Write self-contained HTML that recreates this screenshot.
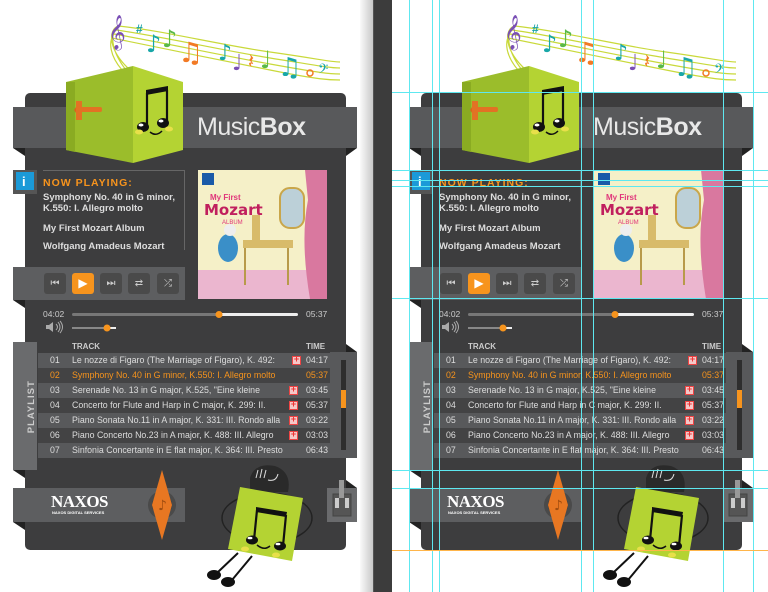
<!DOCTYPE html>
<html><head><meta charset="utf-8">
<style>
*{margin:0;padding:0;box-sizing:border-box}
body{width:768px;height:592px;background:#fff;position:relative;overflow:hidden;font-family:"Liberation Sans",Arial,sans-serif}
.pane{position:absolute;top:0;height:592px;overflow:hidden}
.app{position:absolute;top:0;width:370px;height:592px}
.a{position:absolute}
.t{position:absolute;white-space:nowrap;font-size:9.5px;color:#ddd;font-weight:bold;line-height:1}
.btn{position:absolute;top:273px;width:22px;height:21px;background:#4a4a4a;border-radius:3px;color:#ccc;font-size:10px;text-align:center;line-height:21px}
.row{position:absolute;left:38px;width:292px;height:15px}
.rt{position:absolute;white-space:nowrap;font-size:8.8px;color:#ddd;line-height:15px}
.plus{position:absolute;width:9px;height:9px;background:#f4c8c8;border:1px solid #e44;top:3px}
.plus:after{content:"+";position:absolute;left:0;top:-3px;width:7px;text-align:center;font-size:9px;color:#e33;font-weight:bold}
.gv{position:absolute;top:0;width:1px;height:592px;background:#5ee8f0}
.gh{position:absolute;left:392px;width:376px;height:1px;background:#5ee8f0}
.mb{left:197px;top:115px;font-size:25px;font-weight:normal;color:#e8e8e8;letter-spacing:-0.5px}
</style></head><body>

<div class="a" style="left:360px;top:0;width:13px;height:592px;background:linear-gradient(90deg,#fafafa,#c8c8c8)"></div>
<div class="a" style="left:373px;top:0;width:19px;height:592px;background:#3c3c3c;border-left:1px solid #555"></div>

<!-- LEFT PANE -->
<div class="pane" style="left:0;width:360px">
<div class="app" style="left:0">
<svg class="a" style="left:0;top:0" width="370" height="592">
 <g fill="none" stroke="#c9d93a" stroke-width="1.2">
  <path d="M118 26 C160 30 220 45 270 52 S330 62 340 62"/>
  <path d="M116 30 C160 36 220 50 270 58 S330 68 340 68"/>
  <path d="M114 34 C160 42 220 55 270 64 S330 74 340 74"/>
  <path d="M112 38 C160 48 220 60 270 70 S330 80 340 80"/>
  <path d="M118 26 C108 30 108 50 130 70 M116 30 C110 36 112 52 126 70 M114 34 C108 42 110 56 122 70"/>
 </g>
 <text x="108" y="42" font-size="30" fill="#7a4fb5" font-family="DejaVu Sans">𝄞</text>
 <text x="136" y="33" font-size="12" fill="#1aa3a8" font-weight="bold">#</text>
 <text x="146" y="52" font-size="24" fill="#18a7a8" font-family="DejaVu Sans">♪</text>
 <text x="162" y="47" font-size="24" fill="#5ab947" font-family="DejaVu Sans">♪</text>
 <text x="178" y="62" font-size="28" fill="#f27a25" font-family="DejaVu Sans">♫</text>
 <text x="218" y="60" font-size="22" fill="#18a7a8" font-family="DejaVu Sans">♪</text>
 <text x="232" y="70" font-size="22" fill="#7a4fb5" font-family="DejaVu Sans">♩</text>
 <text x="248" y="68" font-size="20" fill="#f27a25" font-family="DejaVu Sans">𝄽</text>
 <text x="260" y="68" font-size="24" fill="#5ab947" font-family="DejaVu Sans">♩</text>
 <text x="278" y="76" font-size="26" fill="#18a7a8" font-family="DejaVu Sans">♫</text>
 <circle cx="310" cy="73" r="3" fill="none" stroke="#f27a25" stroke-width="1.5"/>
 <text x="318" y="76" font-size="16" fill="#18a7a8" font-family="DejaVu Sans">𝄢</text>
 <rect x="25" y="93" width="321" height="457" rx="5" fill="#3d3d3e"/>
 <rect x="13" y="107" width="344" height="41" fill="#58595b"/>
 <path d="M13 148 L25 148 L25 156Z M357 148 L346 148 L346 156Z" fill="#222"/>
 <path d="M66 82 L133 66 L133 163 L66 150Z" fill="#9bbd2b"/>
 <path d="M133 66 L183 82 L183 150 L133 163Z" fill="#b4d333"/>
 <path d="M66 82 L66 150 L75 152 L75 82Z" fill="#8aab22"/>
 <path d="M78 104 L74 110 L78 116 L82 116 L82 104Z" fill="#d9661c"/>
 <rect x="80" y="107" width="22" height="5" rx="2" fill="#e27224"/>
 <path d="M76 101 L82 101 L82 120 L76 120Z" fill="#e27224"/>
 <path d="M147 93 L147 126 M167 90 L167 122" stroke="#111" stroke-width="2.2" fill="none"/>
 <path d="M146 90 L168 86 L168 91 L146 95Z" fill="#111"/>
 <ellipse cx="143" cy="127" rx="6" ry="5" fill="#111"/><ellipse cx="163" cy="123" rx="6" ry="5" fill="#111"/>
 <ellipse cx="141" cy="125" rx="2.5" ry="1.5" fill="#fff"/><ellipse cx="161" cy="121" rx="2.5" ry="1.5" fill="#fff"/>
 <ellipse cx="139" cy="132" rx="4" ry="2.5" fill="#e8e04a"/><ellipse cx="169" cy="129" rx="4" ry="2.5" fill="#e8e04a"/>
 <path d="M150 132 Q156 137 162 131" stroke="#111" stroke-width="1.5" fill="none"/>
 <rect x="13" y="170" width="24" height="24" fill="#555"/>
 <rect x="16" y="172" width="18" height="18" fill="#1b9ad8"/>
 <path d="M43 170.5 L185 170.5 M184.5 170 L184.5 250" stroke="#666" stroke-width="1"/>
 <rect x="198" y="170" width="129" height="129" fill="#f5f0c8"/>
 <rect x="198" y="270" width="129" height="29" fill="#ebb6cf"/>
 <path d="M305 170 L327 170 L327 299 L310 299 Q300 240 308 200Z" fill="#d9789f"/>
 <rect x="280" y="188" width="24" height="40" rx="10" fill="#bcd0d8" stroke="#c9a64a" stroke-width="2"/>
 <rect x="243" y="240" width="50" height="8" fill="#d8bb6a"/>
 <rect x="252" y="215" width="8" height="30" fill="#d8bb6a"/>
 <path d="M245 248 L245 285 M288 248 L288 285" stroke="#b89a4a" stroke-width="2"/>
 <ellipse cx="228" cy="248" rx="10" ry="14" fill="#3a8fc8"/>
 <circle cx="230" cy="230" r="6" fill="#eee"/>
 <rect x="202" y="173" width="12" height="12" fill="#1a5aa8"/>
 <text x="210" y="200" font-size="8" fill="#e0357a" font-weight="bold">My First</text>
 <text x="204" y="215" font-size="15" fill="#c0205e" font-weight="bold" font-family="DejaVu Sans">Mozart</text>
 <text x="222" y="224" font-size="6" fill="#e0357a">ALBUM</text>
 <rect x="13" y="267" width="172" height="33" fill="#5d5e60"/>
 <path d="M13 300 L25 300 L25 308Z" fill="#222"/>
 <rect x="72" y="313" width="147" height="3" rx="1.5" fill="#777"/>
 <rect x="219" y="313" width="79" height="3" rx="1.5" fill="#eee"/>
 <circle cx="219" cy="314.5" r="3.5" fill="#f7941d"/>
 <path d="M46 325 L49 325 L53 322 L53 332 L49 329 L46 329Z" fill="#aaa"/>
 <path d="M56 324 Q59 327 56 330 M58 322 Q62 327 58 332 M60 321 Q65 327 60 333" stroke="#aaa" fill="none"/>
 <rect x="72" y="327" width="44" height="2" fill="#eee"/>
 <rect x="72" y="327" width="35" height="2" fill="#888"/>
 <circle cx="107" cy="328" r="3.5" fill="#f7941d"/>
 <rect x="13" y="342" width="24" height="128" fill="#6a6b6d"/>
 <path d="M13 470 L25 470 L25 478Z" fill="#222"/>
 <rect x="330" y="352" width="27" height="106" fill="#58595b"/>
 <path d="M346 344 L357 352 L346 352Z" fill="#222"/>
 <rect x="341" y="360" width="5" height="90" fill="#2e2e2e"/>
 <rect x="341" y="390" width="5" height="18" fill="#f7941d"/>
 <rect x="13" y="488" width="172" height="34" fill="#5d5e60"/>
 <path d="M13 522 L25 522 L25 530Z M346 480 L357 488 L346 488Z" fill="#222"/>
 <circle cx="162" cy="505" r="14" fill="#4a4a4a"/>
 <circle cx="162" cy="505" r="10" fill="#3a3a3a"/>
 <path d="M162 470 L172 505 L162 540 L152 505Z" fill="#e87722"/>
 <text x="158" y="510" font-size="14" fill="#a04d10" font-family="DejaVu Sans">♪</text>
 <rect x="327" y="488" width="30" height="34" fill="#6a6b6d"/>
 <rect x="333" y="494" width="18" height="22" fill="#555" stroke="#444"/>
 <rect x="339" y="480" width="5" height="18" fill="#999"/>
 <rect x="335" y="498" width="4" height="10" fill="#ccc"/><rect x="345" y="498" width="4" height="10" fill="#ccc"/>
 <ellipse cx="267" cy="518" rx="45" ry="25" fill="none" stroke="#222" stroke-width="1.5"/>
 <path d="M250 478 Q255 462 275 466 Q292 472 288 492 L250 492Z" fill="#2a2a2a"/>
 <path d="M256 478 L258 470 M260 478 L262 469 M264 478 L266 470 M268 480 Q276 482 278 474" stroke="#ddd" stroke-width="1" fill="none"/>
 <path d="M238 553 L218 572 M252 556 L232 580" stroke="#111" stroke-width="2" fill="none"/>
 <ellipse cx="214" cy="575" rx="7" ry="5" fill="#111"/><ellipse cx="228" cy="582" rx="7" ry="5" fill="#111"/>
 <path d="M240 487 L303 498 L292 561 L228 549Z" fill="#b4d333"/>
 <path d="M257 510 L254 540 M286 515 L283 546" stroke="#111" stroke-width="2.2" fill="none"/>
 <path d="M256 507 L287 512 L286 517 L256 512Z" fill="#111"/>
 <ellipse cx="252" cy="540" rx="6" ry="4.5" fill="#111"/><ellipse cx="280" cy="546" rx="6" ry="4.5" fill="#111"/>
 <ellipse cx="250" cy="538" rx="2.5" ry="1.3" fill="#fff"/><ellipse cx="278" cy="544" rx="2.5" ry="1.3" fill="#fff"/>
 <ellipse cx="245" cy="549" rx="4" ry="2.5" fill="#e8e04a"/><ellipse cx="276" cy="555" rx="4" ry="2.5" fill="#e8e04a"/>
 <path d="M257 545 Q264 551 270 546" stroke="#111" stroke-width="1.5" fill="none"/>
</svg>
<div class="t mb">Music<b style="font-weight:bold">Box</b></div>
<div class="t" style="left:22px;top:175px;font-size:13px;color:#fff">i</div>
<div class="t" style="left:43px;top:178px;font-size:10.5px;color:#f7941d;letter-spacing:1px">NOW PLAYING:</div>
<div class="t" style="left:43px;top:193px">Symphony No. 40 in G minor,</div>
<div class="t" style="left:43px;top:204px">K.550: I. Allegro molto</div>
<div class="t" style="left:43px;top:224px">My First Mozart Album</div>
<div class="t" style="left:43px;top:242px">Wolfgang Amadeus Mozart</div>
<div class="btn" style="left:44px">⏮</div>
<div class="btn" style="left:72px;background:#f7941d;color:#fff;font-size:12px">▶</div>
<div class="btn" style="left:100px">⏭</div>
<div class="btn" style="left:128px">⇄</div>
<div class="btn" style="left:157px">⤮</div>
<div class="t" style="left:43px;top:310px;font-size:8.5px;font-weight:normal;color:#ccc">04:02</div>
<div class="t" style="left:306px;top:310px;font-size:8.5px;font-weight:normal;color:#ccc">05:37</div>
<div class="t" style="left:5px;top:402px;font-size:9.5px;color:#ccc;transform:rotate(-90deg);letter-spacing:1px">PLAYLIST</div>
<div class="t" style="left:72px;top:343px;font-size:8px;color:#ccc">TRACK</div>
<div class="t" style="left:306px;top:343px;font-size:8px;color:#ccc">TIME</div>
<div class="row" style="top:353px;background:#58595b"></div>
<div class="row" style="top:368px;background:#434344"></div>
<div class="row" style="top:383px;background:#58595b"></div>
<div class="row" style="top:398px;background:#434344"></div>
<div class="row" style="top:413px;background:#58595b"></div>
<div class="row" style="top:428px;background:#434344"></div>
<div class="row" style="top:443px;background:#58595b"></div>
<div class="rt" style="left:50px;top:353px">01</div><div class="rt" style="left:72px;top:353px">Le nozze di Figaro (The Marriage of Figaro), K. 492:</div><div class="plus" style="left:292px;top:356px"></div><div class="rt" style="left:306px;top:353px">04:17</div>
<div class="rt" style="left:50px;top:368px;color:#f7941d">02</div><div class="rt" style="left:72px;top:368px;color:#f7941d">Symphony No. 40 in G minor, K.550: I. Allegro molto</div><div class="rt" style="left:306px;top:368px;color:#f7941d">05:37</div>
<div class="rt" style="left:50px;top:383px">03</div><div class="rt" style="left:72px;top:383px">Serenade No. 13 in G major, K.525, "Eine kleine</div><div class="plus" style="left:289px;top:386px"></div><div class="rt" style="left:306px;top:383px">03:45</div>
<div class="rt" style="left:50px;top:398px">04</div><div class="rt" style="left:72px;top:398px">Concerto for Flute and Harp in C major, K. 299: II.</div><div class="plus" style="left:289px;top:401px"></div><div class="rt" style="left:306px;top:398px">05:37</div>
<div class="rt" style="left:50px;top:413px">05</div><div class="rt" style="left:72px;top:413px">Piano Sonata No.11 in A major, K. 331: III. Rondo alla</div><div class="plus" style="left:289px;top:416px"></div><div class="rt" style="left:306px;top:413px">03:22</div>
<div class="rt" style="left:50px;top:428px">06</div><div class="rt" style="left:72px;top:428px">Piano Concerto No.23 in A major, K. 488: III. Allegro</div><div class="plus" style="left:289px;top:431px"></div><div class="rt" style="left:306px;top:428px">03:03</div>
<div class="rt" style="left:50px;top:443px">07</div><div class="rt" style="left:72px;top:443px">Sinfonia Concertante in E flat major, K. 364: III. Presto</div><div class="rt" style="left:306px;top:443px">06:43</div>
<div class="t" style="left:51px;top:493px;font-size:17px;font-family:'Liberation Serif',serif;color:#fff;letter-spacing:-0.5px">NAXOS</div>
<div class="t" style="left:52px;top:511px;font-size:4px;color:#fff">NAXOS DIGITAL SERVICES</div>
</div>
</div>

<!-- RIGHT PANE -->
<div class="pane" style="left:392px;width:376px">
<div class="app" style="left:4px">
<svg class="a" style="left:0;top:0" width="370" height="592">
 <g fill="none" stroke="#c9d93a" stroke-width="1.2">
  <path d="M118 26 C160 30 220 45 270 52 S330 62 340 62"/>
  <path d="M116 30 C160 36 220 50 270 58 S330 68 340 68"/>
  <path d="M114 34 C160 42 220 55 270 64 S330 74 340 74"/>
  <path d="M112 38 C160 48 220 60 270 70 S330 80 340 80"/>
  <path d="M118 26 C108 30 108 50 130 70 M116 30 C110 36 112 52 126 70 M114 34 C108 42 110 56 122 70"/>
 </g>
 <text x="108" y="42" font-size="30" fill="#7a4fb5" font-family="DejaVu Sans">𝄞</text>
 <text x="136" y="33" font-size="12" fill="#1aa3a8" font-weight="bold">#</text>
 <text x="146" y="52" font-size="24" fill="#18a7a8" font-family="DejaVu Sans">♪</text>
 <text x="162" y="47" font-size="24" fill="#5ab947" font-family="DejaVu Sans">♪</text>
 <text x="178" y="62" font-size="28" fill="#f27a25" font-family="DejaVu Sans">♫</text>
 <text x="218" y="60" font-size="22" fill="#18a7a8" font-family="DejaVu Sans">♪</text>
 <text x="232" y="70" font-size="22" fill="#7a4fb5" font-family="DejaVu Sans">♩</text>
 <text x="248" y="68" font-size="20" fill="#f27a25" font-family="DejaVu Sans">𝄽</text>
 <text x="260" y="68" font-size="24" fill="#5ab947" font-family="DejaVu Sans">♩</text>
 <text x="278" y="76" font-size="26" fill="#18a7a8" font-family="DejaVu Sans">♫</text>
 <circle cx="310" cy="73" r="3" fill="none" stroke="#f27a25" stroke-width="1.5"/>
 <text x="318" y="76" font-size="16" fill="#18a7a8" font-family="DejaVu Sans">𝄢</text>
 <rect x="25" y="93" width="321" height="457" rx="5" fill="#3d3d3e"/>
 <rect x="13" y="107" width="344" height="41" fill="#58595b"/>
 <path d="M13 148 L25 148 L25 156Z M357 148 L346 148 L346 156Z" fill="#222"/>
 <path d="M66 82 L133 66 L133 163 L66 150Z" fill="#9bbd2b"/>
 <path d="M133 66 L183 82 L183 150 L133 163Z" fill="#b4d333"/>
 <path d="M66 82 L66 150 L75 152 L75 82Z" fill="#8aab22"/>
 <path d="M78 104 L74 110 L78 116 L82 116 L82 104Z" fill="#d9661c"/>
 <rect x="80" y="107" width="22" height="5" rx="2" fill="#e27224"/>
 <path d="M76 101 L82 101 L82 120 L76 120Z" fill="#e27224"/>
 <path d="M147 93 L147 126 M167 90 L167 122" stroke="#111" stroke-width="2.2" fill="none"/>
 <path d="M146 90 L168 86 L168 91 L146 95Z" fill="#111"/>
 <ellipse cx="143" cy="127" rx="6" ry="5" fill="#111"/><ellipse cx="163" cy="123" rx="6" ry="5" fill="#111"/>
 <ellipse cx="141" cy="125" rx="2.5" ry="1.5" fill="#fff"/><ellipse cx="161" cy="121" rx="2.5" ry="1.5" fill="#fff"/>
 <ellipse cx="139" cy="132" rx="4" ry="2.5" fill="#e8e04a"/><ellipse cx="169" cy="129" rx="4" ry="2.5" fill="#e8e04a"/>
 <path d="M150 132 Q156 137 162 131" stroke="#111" stroke-width="1.5" fill="none"/>
 <rect x="13" y="170" width="24" height="24" fill="#555"/>
 <rect x="16" y="172" width="18" height="18" fill="#1b9ad8"/>
 <path d="M43 170.5 L185 170.5 M184.5 170 L184.5 250" stroke="#666" stroke-width="1"/>
 <rect x="198" y="170" width="129" height="129" fill="#f5f0c8"/>
 <rect x="198" y="270" width="129" height="29" fill="#ebb6cf"/>
 <path d="M305 170 L327 170 L327 299 L310 299 Q300 240 308 200Z" fill="#d9789f"/>
 <rect x="280" y="188" width="24" height="40" rx="10" fill="#bcd0d8" stroke="#c9a64a" stroke-width="2"/>
 <rect x="243" y="240" width="50" height="8" fill="#d8bb6a"/>
 <rect x="252" y="215" width="8" height="30" fill="#d8bb6a"/>
 <path d="M245 248 L245 285 M288 248 L288 285" stroke="#b89a4a" stroke-width="2"/>
 <ellipse cx="228" cy="248" rx="10" ry="14" fill="#3a8fc8"/>
 <circle cx="230" cy="230" r="6" fill="#eee"/>
 <rect x="202" y="173" width="12" height="12" fill="#1a5aa8"/>
 <text x="210" y="200" font-size="8" fill="#e0357a" font-weight="bold">My First</text>
 <text x="204" y="215" font-size="15" fill="#c0205e" font-weight="bold" font-family="DejaVu Sans">Mozart</text>
 <text x="222" y="224" font-size="6" fill="#e0357a">ALBUM</text>
 <rect x="13" y="267" width="172" height="33" fill="#5d5e60"/>
 <path d="M13 300 L25 300 L25 308Z" fill="#222"/>
 <rect x="72" y="313" width="147" height="3" rx="1.5" fill="#777"/>
 <rect x="219" y="313" width="79" height="3" rx="1.5" fill="#eee"/>
 <circle cx="219" cy="314.5" r="3.5" fill="#f7941d"/>
 <path d="M46 325 L49 325 L53 322 L53 332 L49 329 L46 329Z" fill="#aaa"/>
 <path d="M56 324 Q59 327 56 330 M58 322 Q62 327 58 332 M60 321 Q65 327 60 333" stroke="#aaa" fill="none"/>
 <rect x="72" y="327" width="44" height="2" fill="#eee"/>
 <rect x="72" y="327" width="35" height="2" fill="#888"/>
 <circle cx="107" cy="328" r="3.5" fill="#f7941d"/>
 <rect x="13" y="342" width="24" height="128" fill="#6a6b6d"/>
 <path d="M13 470 L25 470 L25 478Z" fill="#222"/>
 <rect x="330" y="352" width="27" height="106" fill="#58595b"/>
 <path d="M346 344 L357 352 L346 352Z" fill="#222"/>
 <rect x="341" y="360" width="5" height="90" fill="#2e2e2e"/>
 <rect x="341" y="390" width="5" height="18" fill="#f7941d"/>
 <rect x="13" y="488" width="172" height="34" fill="#5d5e60"/>
 <path d="M13 522 L25 522 L25 530Z M346 480 L357 488 L346 488Z" fill="#222"/>
 <circle cx="162" cy="505" r="14" fill="#4a4a4a"/>
 <circle cx="162" cy="505" r="10" fill="#3a3a3a"/>
 <path d="M162 470 L172 505 L162 540 L152 505Z" fill="#e87722"/>
 <text x="158" y="510" font-size="14" fill="#a04d10" font-family="DejaVu Sans">♪</text>
 <rect x="327" y="488" width="30" height="34" fill="#6a6b6d"/>
 <rect x="333" y="494" width="18" height="22" fill="#555" stroke="#444"/>
 <rect x="339" y="480" width="5" height="18" fill="#999"/>
 <rect x="335" y="498" width="4" height="10" fill="#ccc"/><rect x="345" y="498" width="4" height="10" fill="#ccc"/>
 <ellipse cx="267" cy="518" rx="45" ry="25" fill="none" stroke="#222" stroke-width="1.5"/>
 <path d="M250 478 Q255 462 275 466 Q292 472 288 492 L250 492Z" fill="#2a2a2a"/>
 <path d="M256 478 L258 470 M260 478 L262 469 M264 478 L266 470 M268 480 Q276 482 278 474" stroke="#ddd" stroke-width="1" fill="none"/>
 <path d="M238 553 L218 572 M252 556 L232 580" stroke="#111" stroke-width="2" fill="none"/>
 <ellipse cx="214" cy="575" rx="7" ry="5" fill="#111"/><ellipse cx="228" cy="582" rx="7" ry="5" fill="#111"/>
 <path d="M240 487 L303 498 L292 561 L228 549Z" fill="#b4d333"/>
 <path d="M257 510 L254 540 M286 515 L283 546" stroke="#111" stroke-width="2.2" fill="none"/>
 <path d="M256 507 L287 512 L286 517 L256 512Z" fill="#111"/>
 <ellipse cx="252" cy="540" rx="6" ry="4.5" fill="#111"/><ellipse cx="280" cy="546" rx="6" ry="4.5" fill="#111"/>
 <ellipse cx="250" cy="538" rx="2.5" ry="1.3" fill="#fff"/><ellipse cx="278" cy="544" rx="2.5" ry="1.3" fill="#fff"/>
 <ellipse cx="245" cy="549" rx="4" ry="2.5" fill="#e8e04a"/><ellipse cx="276" cy="555" rx="4" ry="2.5" fill="#e8e04a"/>
 <path d="M257 545 Q264 551 270 546" stroke="#111" stroke-width="1.5" fill="none"/>
</svg>
<div class="t mb">Music<b style="font-weight:bold">Box</b></div>
<div class="t" style="left:22px;top:175px;font-size:13px;color:#fff">i</div>
<div class="t" style="left:43px;top:178px;font-size:10.5px;color:#f7941d;letter-spacing:1px">NOW PLAYING:</div>
<div class="t" style="left:43px;top:193px">Symphony No. 40 in G minor,</div>
<div class="t" style="left:43px;top:204px">K.550: I. Allegro molto</div>
<div class="t" style="left:43px;top:224px">My First Mozart Album</div>
<div class="t" style="left:43px;top:242px">Wolfgang Amadeus Mozart</div>
<div class="btn" style="left:44px">⏮</div>
<div class="btn" style="left:72px;background:#f7941d;color:#fff;font-size:12px">▶</div>
<div class="btn" style="left:100px">⏭</div>
<div class="btn" style="left:128px">⇄</div>
<div class="btn" style="left:157px">⤮</div>
<div class="t" style="left:43px;top:310px;font-size:8.5px;font-weight:normal;color:#ccc">04:02</div>
<div class="t" style="left:306px;top:310px;font-size:8.5px;font-weight:normal;color:#ccc">05:37</div>
<div class="t" style="left:5px;top:402px;font-size:9.5px;color:#ccc;transform:rotate(-90deg);letter-spacing:1px">PLAYLIST</div>
<div class="t" style="left:72px;top:343px;font-size:8px;color:#ccc">TRACK</div>
<div class="t" style="left:306px;top:343px;font-size:8px;color:#ccc">TIME</div>
<div class="row" style="top:353px;background:#58595b"></div>
<div class="row" style="top:368px;background:#434344"></div>
<div class="row" style="top:383px;background:#58595b"></div>
<div class="row" style="top:398px;background:#434344"></div>
<div class="row" style="top:413px;background:#58595b"></div>
<div class="row" style="top:428px;background:#434344"></div>
<div class="row" style="top:443px;background:#58595b"></div>
<div class="rt" style="left:50px;top:353px">01</div><div class="rt" style="left:72px;top:353px">Le nozze di Figaro (The Marriage of Figaro), K. 492:</div><div class="plus" style="left:292px;top:356px"></div><div class="rt" style="left:306px;top:353px">04:17</div>
<div class="rt" style="left:50px;top:368px;color:#f7941d">02</div><div class="rt" style="left:72px;top:368px;color:#f7941d">Symphony No. 40 in G minor, K.550: I. Allegro molto</div><div class="rt" style="left:306px;top:368px;color:#f7941d">05:37</div>
<div class="rt" style="left:50px;top:383px">03</div><div class="rt" style="left:72px;top:383px">Serenade No. 13 in G major, K.525, "Eine kleine</div><div class="plus" style="left:289px;top:386px"></div><div class="rt" style="left:306px;top:383px">03:45</div>
<div class="rt" style="left:50px;top:398px">04</div><div class="rt" style="left:72px;top:398px">Concerto for Flute and Harp in C major, K. 299: II.</div><div class="plus" style="left:289px;top:401px"></div><div class="rt" style="left:306px;top:398px">05:37</div>
<div class="rt" style="left:50px;top:413px">05</div><div class="rt" style="left:72px;top:413px">Piano Sonata No.11 in A major, K. 331: III. Rondo alla</div><div class="plus" style="left:289px;top:416px"></div><div class="rt" style="left:306px;top:413px">03:22</div>
<div class="rt" style="left:50px;top:428px">06</div><div class="rt" style="left:72px;top:428px">Piano Concerto No.23 in A major, K. 488: III. Allegro</div><div class="plus" style="left:289px;top:431px"></div><div class="rt" style="left:306px;top:428px">03:03</div>
<div class="rt" style="left:50px;top:443px">07</div><div class="rt" style="left:72px;top:443px">Sinfonia Concertante in E flat major, K. 364: III. Presto</div><div class="rt" style="left:306px;top:443px">06:43</div>
<div class="t" style="left:51px;top:493px;font-size:17px;font-family:'Liberation Serif',serif;color:#fff;letter-spacing:-0.5px">NAXOS</div>
<div class="t" style="left:52px;top:511px;font-size:4px;color:#fff">NAXOS DIGITAL SERVICES</div>
</div>
</div>

<div class="gv" style="left:409px"></div>
<div class="gv" style="left:432px"></div>
<div class="gv" style="left:439px"></div>
<div class="gv" style="left:581px"></div>
<div class="gv" style="left:593px"></div>
<div class="gv" style="left:723px"></div>
<div class="gv" style="left:753px"></div>
<div class="gh" style="top:92px"></div>
<div class="gh" style="top:170px"></div>
<div class="gh" style="top:180px"></div>
<div class="gh" style="top:186px"></div>
<div class="gh" style="top:298px"></div>
<div class="gh" style="top:470px"></div>
<div class="gh" style="top:488px"></div>
<div class="gh" style="top:550px;background:#ffb54a"></div>
</body></html>
